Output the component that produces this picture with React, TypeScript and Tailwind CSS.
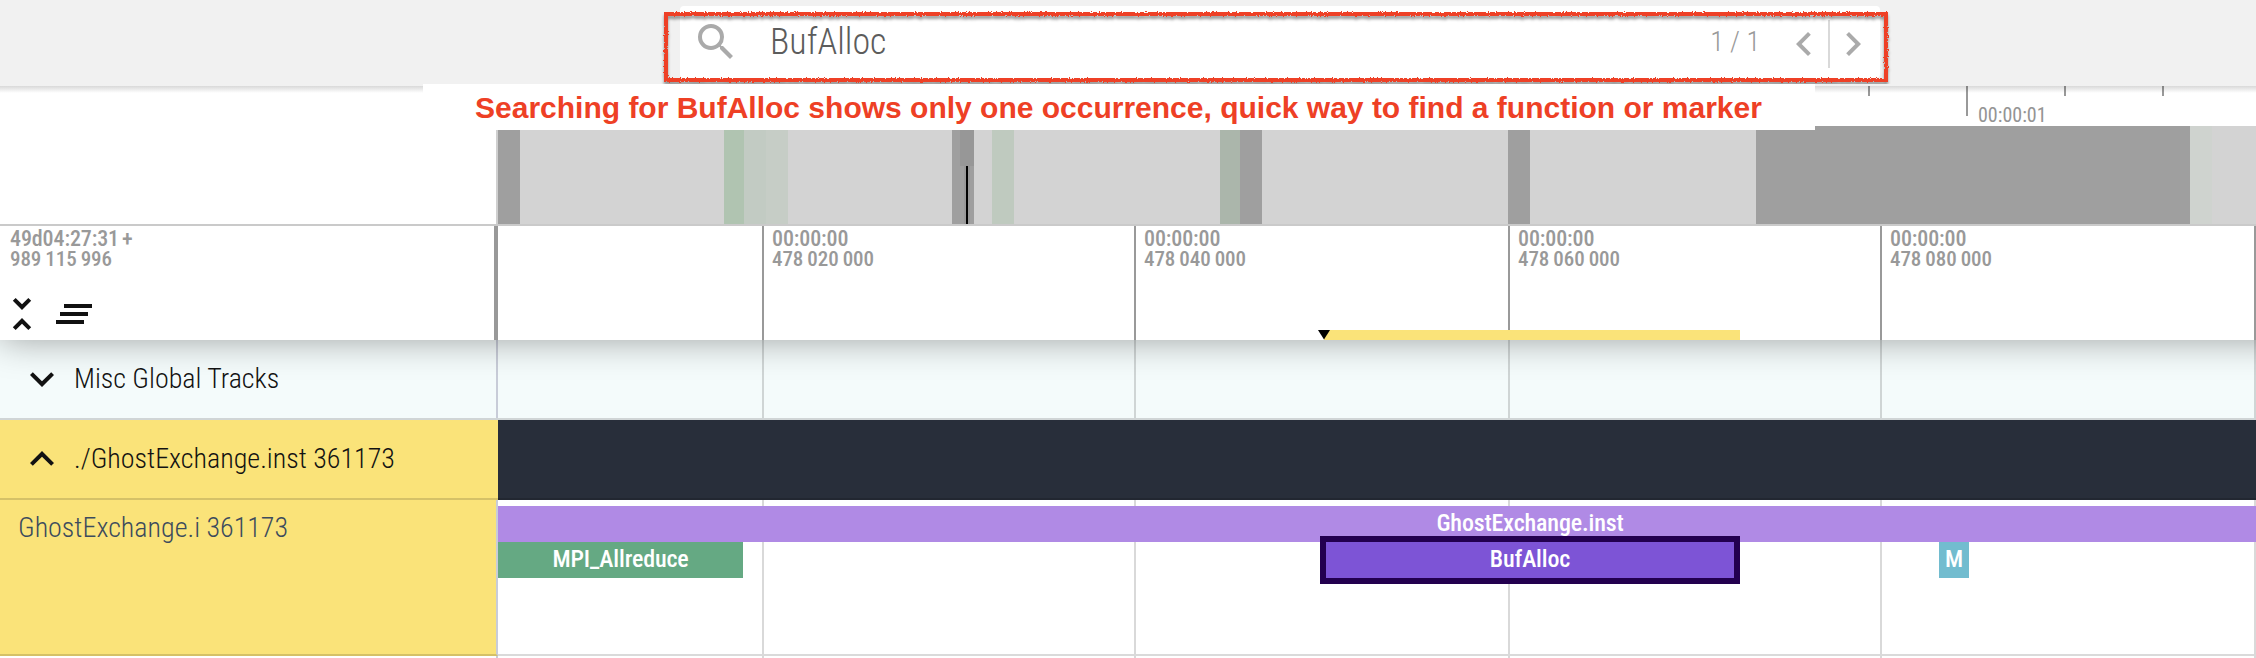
import React from "react";

const condensed = "font-['Roboto_Condensed',Roboto,sans-serif] [font-stretch:75%]";

function Icon({ d, className }: { d: string; className: string }) {
  return (
    <svg viewBox="0 0 24 24" className={`block h-12 w-12 shrink-0 ${className}`} fill="currentColor">
      <path d={d} />
    </svg>
  );
}

const icons = {
  search:
    "M15.5 14h-.79l-.28-.27A6.471 6.471 0 0 0 16 9.5 6.5 6.5 0 1 0 9.5 16c1.61 0 3.09-.59 4.23-1.57l.27.28v.79l5 4.99L20.49 19l-4.99-5zm-6 0C7.01 14 5 11.99 5 9.5S7.01 5 9.5 5 14 7.01 14 9.5 11.99 14 9.5 14z",
  left: "M15.41 7.41L14 6l-6 6 6 6 1.41-1.41L10.83 12z",
  right: "M10 6L8.59 7.41 13.17 12l-4.58 4.59L10 18l6-6z",
  unfoldLess:
    "M7.41 18.59L8.83 20 12 16.83 15.17 20l1.41-1.41L12 14l-4.59 4.59zm9.18-13.18L15.17 4 12 7.17 8.83 4 7.41 5.41 12 10l4.59-4.59z",
  clearAll: "M5 13h14v-2H5v2zm-2 4h14v-2H3v2zM7 7v2h14V7H7z",
  more: "M16.59 8.59L12 13.17 7.41 8.59 6 10l6 6 6-6z",
  less: "M12 8l-6 6 1.41 1.41L12 10.83l4.59 4.58L18 14z",
};

const segments = [
  ["w-[22px]", "bg-[#9f9f9f]"],
  ["w-[204px]", "bg-[#d3d3d3]"],
  ["w-[20px]", "bg-[#b0c4b1]"],
  ["w-[22px]", "bg-[#c2cbc3]"],
  ["w-[22px]", "bg-[#c6cdc6]"],
  ["w-[164px]", "bg-[#d3d3d3]"],
  ["w-[22px]", "bg-[#9f9f9f]"],
  ["w-[18px]", "bg-[#d3d3d3]"],
  ["w-[22px]", "bg-[#bfcabf]"],
  ["w-[206px]", "bg-[#d3d3d3]"],
  ["w-[20px]", "bg-[#abb6ab]"],
  ["w-[22px]", "bg-[#9f9f9f]"],
  ["w-[246px]", "bg-[#d3d3d3]"],
  ["w-[22px]", "bg-[#9f9f9f]"],
  ["w-[226px]", "bg-[#d3d3d3]"],
  ["w-[434px]", "bg-[#9f9f9f]"],
  ["w-[22px]", "bg-[#cfd3cf]"],
  ["w-[44px]", "bg-[#d3d3d3]"],
];

const marks = [
  { w: "w-[264px]", label: null },
  { w: "w-[372px]", label: "478 020 000" },
  { w: "w-[374px]", label: "478 040 000" },
  { w: "w-[372px]", label: "478 060 000" },
  { w: "w-[374px]", label: "478 080 000" },
  { w: "w-[2px]", label: "" },
];

function GridLines() {
  return (
    <div className="pointer-events-none absolute inset-0 flex">
      {marks.map((m, i) => (
        <div key={i} className={`${m.w} shrink-0 ${i ? "border-l-2 border-black/15" : ""}`} />
      ))}
    </div>
  );
}

function Header() {
  return (
    <header className="flex h-[86px] justify-center bg-[#f1f1f1] pl-[304px] pt-[6px]">
      <div className="flex h-[72px] w-[1200px] rounded-[4px] bg-white pt-3">
        <Icon d={icons.search} className="ml-3 text-[#aaaaaa]" />
        <span className={`${condensed} ml-[30px] flex-1 text-[36px] leading-[48px] font-light text-[#5c5c5c]`}>
          BufAlloc
        </span>
        <span className={`${condensed} pr-5 text-[28px] leading-[48px] font-light text-[#999]`}>1 / 1</span>
        <Icon d={icons.left} className="mt-[2px] text-[#aaaaaa]" />
        <div className="mt-[2px] h-12 w-[2px] bg-[#d9d9d9]" />
        <Icon d={icons.right} className="mt-[2px] mr-[3px] -ml-px text-[#aaaaaa]" />
      </div>
    </header>
  );
}

function Overview() {
  return (
    <section className="flex h-[140px] border-b-2 border-[#cacaca]">
      <div className="w-[496px] shrink-0 bg-white" />
      <div className="relative flex flex-1 flex-col border-l-2 border-[#cfcfcf]">
        <div className="flex h-10 bg-white pl-[1370px] text-[#949494]">
          <div className="h-[10px] w-[98px] border-l-2 border-[#999]" />
          <div className="h-[30px] w-[98px] border-l-2 border-[#999] pt-[18px] pl-[10px]">
            <span className={`${condensed} block text-[20px] leading-[22px]`}>00:00:01</span>
          </div>
          <div className="h-[10px] w-[98px] border-l-2 border-[#999]" />
          <div className="h-[10px] w-[90px] border-l-2 border-[#999]" />
        </div>
        <div className="flex flex-1">
          {segments.map(([w, c], i) => (
            <div key={i} className={`${w} ${c} shrink-0`} />
          ))}
        </div>
        <div className="absolute top-[44px] left-[462px] h-[36px] w-[14px] bg-[#979797]" />
        <div className="absolute top-[80px] left-[466px] h-[58px] w-[6px] border-x-2 border-[#979797] bg-black" />
      </div>
    </section>
  );
}

function TimeAxis() {
  return (
    <section
      className={`${condensed} flex h-[114px] bg-white text-[22px] leading-[20px] font-medium tracking-[-0.1px] text-[#999]`}
    >
      <div className="flex w-[498px] shrink-0 flex-col justify-between border-r-4 border-[#999] pt-[3px] pb-[2px]">
        <div className="pl-[10px]">
          <div>
            49d04:27:31<span className="ml-[3px]">+</span>
          </div>
          <div className="text-[21px] leading-[20px] [word-spacing:-0.6px]">989 115 996</div>
        </div>
        <div className="flex gap-1 text-[#111]">
          <Icon d={icons.unfoldLess} className="-ml-[2px]" />
          <Icon d={icons.clearAll} className="" />
        </div>
      </div>
      <div className="relative flex flex-1">
        {marks.map((m, i) => (
          <div key={i} className={`${m.w} shrink-0 ${i ? "border-l-2 border-[#999] pt-[3px] pl-2" : ""}`}>
            {m.label && (
              <>
                <div>00:00:00</div>
                <div className="text-[21px] leading-[20px] [word-spacing:-0.6px]">{m.label}</div>
              </>
            )}
          </div>
        ))}
        <div className="absolute bottom-0 left-[826px] h-[10px] w-[416px] bg-[#fae379]" />
        <svg viewBox="0 0 12 10" className="absolute bottom-0 left-[820px] h-[10px] w-3">
          <path d="M0 0h12L6 9.5z" />
        </svg>
      </div>
    </section>
  );
}

function Tracks() {
  return (
    <main className={condensed}>
      <div className="relative flex h-20 overflow-hidden border-b-2 border-[#d0d5d6] bg-[#f4fbfb] text-[28px] text-[#121212]">
        <div className="flex w-[498px] shrink-0 items-center border-r-2 border-[#c8ccd8] pl-[18px]">
          <Icon d={icons.more} className="" />
          <span className="ml-2 font-light">Misc Global Tracks</span>
        </div>
        <div className="relative flex-1">
          <GridLines />
        </div>
        <div className="absolute -top-[100px] -right-16 left-0 h-[100px] shadow-[0_0_36px_0_rgba(0,0,0,0.36)]" />
      </div>
      <div className="flex h-20 text-[28px] text-[#121212]">
        <div className="flex w-[498px] shrink-0 items-center border-b-2 border-[#d5c167] bg-[#fae379] pl-[18px]">
          <Icon d={icons.less} className="" />
          <span className="ml-2 font-light">./GhostExchange.inst 361173</span>
        </div>
        <div className="flex-1 border-b-2 border-[#222731] bg-[#282e3a]" />
      </div>
      <div className="flex h-[156px] border-b-2 border-[#dadada]">
        <div className="-mb-[2px] w-[498px] shrink-0 border-r-2 border-b-2 border-r-[#c8ccd8] border-b-[#d5c167] bg-[#fae379] pt-[9px] pl-[18px] text-[28px] leading-[38px] font-light text-[#3c4b5d]">
          GhostExchange.i 361173
        </div>
        <div className="relative flex-1 pt-[6px] text-center text-[24px] leading-[34px] font-medium tracking-[-0.15px] text-white">
          <GridLines />
          <div className="relative h-9 bg-[#b08ae5] pl-[306px]">GhostExchange.inst</div>
          <div className="relative flex h-9">
            <div className="w-[245px] bg-[#65a983]">MPI_Allreduce</div>
            <div className="-my-[6px] ml-[577px] h-12 w-[420px] border-[6px] border-[#23004f] bg-[#7d54d6]">
              BufAlloc
            </div>
            <div className="ml-[199px] w-[30px] bg-[#72bccf]">M</div>
          </div>
        </div>
      </div>
      <div className="relative ml-[496px] h-[2px] border-l-2 border-[#c8ccd8]">
        <GridLines />
      </div>
    </main>
  );
}

function Annotation() {
  return (
    <>
      <div className="absolute top-[86px] right-0 left-0 h-[7px] bg-linear-to-b from-black/15 to-transparent" />
      <svg className="absolute top-0 left-[650px] h-[84px] w-[1250px] overflow-hidden" fill="none">
        <filter id="chalk" x="-1%" y="-10%" width="102%" height="120%">
          <feTurbulence type="fractalNoise" baseFrequency="0.73" numOctaves="2" seed="4" />
          <feDisplacementMap in="SourceGraphic" scale="3" xChannelSelector="R" yChannelSelector="G" />
          <feDropShadow dx="0" dy="3" stdDeviation="1.5" floodColor="#000" floodOpacity="0.4" />
        </filter>
        <rect x="16" y="14" width="1220" height="66" stroke="#ee4025" strokeWidth="4" filter="url(#chalk)" />
      </svg>
      <div className="absolute top-[84px] left-[423px] h-[46px] w-[1392px] bg-white pl-[52px] font-['Liberation_Sans',Arial,sans-serif] text-[30px] leading-[48px] font-bold whitespace-nowrap text-[#ee4025]">
        Searching for BufAlloc shows only one occurrence, quick way to find a function or marker
      </div>
    </>
  );
}

export default function App() {
  return (
    <div className="relative h-[658px] w-[2256px] overflow-hidden bg-white">
      <Header />
      <Overview />
      <TimeAxis />
      <Tracks />
      <Annotation />
    </div>
  );
}
